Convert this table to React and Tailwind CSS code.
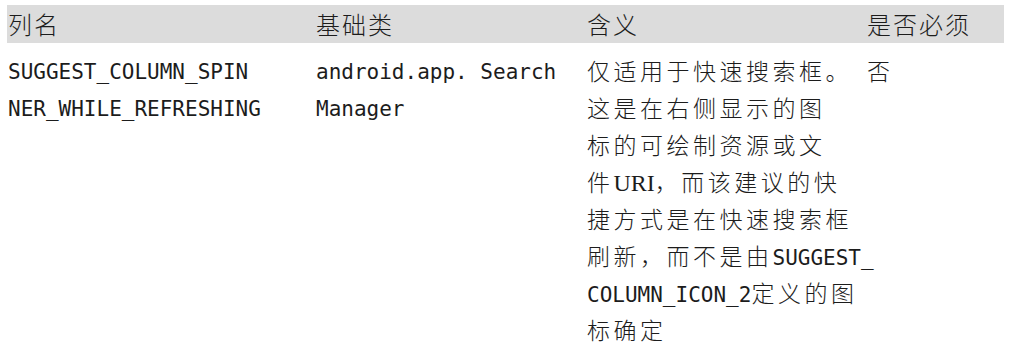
import React from 'react';

const mono = "font-['DejaVu_Sans_Mono','Noto_Sans_CJK_SC',monospace] text-[21px]";
const cjkBase = "font-['Noto_Sans_CJK_SC',sans-serif] font-light";
const cjk = `${cjkBase} text-[23px] tracking-[3.5px]`;
const head = `${cjkBase} text-[24px] tracking-[2px] leading-[38px]`;

const meaningLines = [
  [{ t: '仅适用于快速搜索框。', k: 'cjk' }],
  [{ t: '这是在右侧显示的图', k: 'cjk' }],
  [{ t: '标的可绘制资源或文', k: 'cjk' }],
  [
    { t: '件', k: 'cjk' },
    { t: 'URI', k: 'serif' },
    { t: '，而该建议的快', k: 'cjk' },
  ],
  [{ t: '捷方式是在快速搜索框', k: 'cjk' }],
  [
    { t: '刷新，而不是由', k: 'cjk' },
    { t: 'SUGGEST_', k: 'mono' },
  ],
  [
    { t: 'COLUMN_ICON_2', k: 'mono' },
    { t: '定义的图', k: 'cjk' },
  ],
  [{ t: '标确定', k: 'cjk' }],
];

const partClass = {
  cjk: cjk,
  mono: mono,
  serif: "font-['Liberation_Serif',serif] text-[24px]",
};

const App = () => {
  return (
    <div className="w-[1011px] h-[351px] bg-white text-[#1c1c1c] pt-[5px] pl-[7px]">
      {/* Header */}
      <div className="w-[997px] h-[38px] bg-[#dcdcdc] grid grid-cols-[309px_271px_280px_1fr] items-center">
        <div className={`${head} pl-[1px]`}>列名</div>
        <div className={head}>基础类</div>
        <div className={head}>含义</div>
        <div className={head}>是否必须</div>
      </div>

      {/* Row */}
      <div className="w-[997px] grid grid-cols-[309px_271px_280px_1fr] pt-[9px]">
        <div className={`${mono} leading-[37px] pl-[1px] pt-[2px]`}>
          <div>SUGGEST_COLUMN_SPIN</div>
          <div>NER_WHILE_REFRESHING</div>
        </div>
        <div className={`${mono} leading-[37px] pt-[2px]`}>
          <div>android.app. Search</div>
          <div>Manager</div>
        </div>
        <div className="leading-[37px]">
          {meaningLines.map((line, i) => (
            <div key={i} className="h-[37px] whitespace-nowrap">
              {line.map((p, j) => (
                <span key={j} className={partClass[p.k]}>
                  {p.t}
                </span>
              ))}
            </div>
          ))}
        </div>
        <div className={`${cjk} leading-[37px]`}>否</div>
      </div>
    </div>
  );
};

export default App;
